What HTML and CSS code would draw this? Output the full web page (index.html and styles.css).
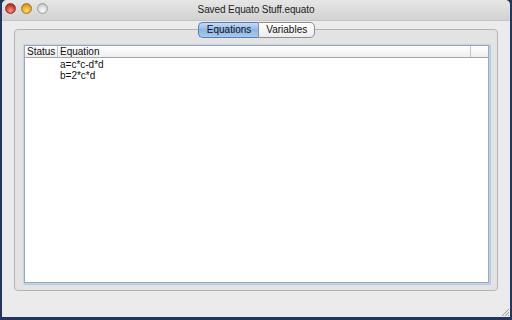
FILE: index.html
```html
<!DOCTYPE html>
<html>
<head>
<meta charset="utf-8">
<link rel="stylesheet" href="styles.css">
</head>
<body>
<div class="window">
  <div class="titlebar">
    <div class="lights">
      <span class="light red"></span>
      <span class="light yellow"></span>
      <span class="light gray"></span>
    </div>
    <div class="title">Saved Equato Stuff.equato</div>
  </div>
  <div class="content">
    <div class="tabbox">
      <div class="tabs">
        <span class="tab selected">Equations</span>
        <span class="tab">Variables</span>
      </div>
      <div class="table">
        <div class="thead">
          <span class="th status">Status</span>
          <span class="th eq">Equation</span>
          <span class="th corner"></span>
        </div>
        <div class="row first"><span class="cell status"></span><span class="cell eq">a=c*c-d*d</span></div>
        <div class="row"><span class="cell status"></span><span class="cell eq">b=2*c*d</span></div>
      </div>
    </div>
    <div class="grip">
      <svg width="10" height="10" viewBox="0 0 10 10"><path d="M9 2L2 9M9 5L5 9M9 8L8 9" stroke="#999" stroke-width="1" fill="none"/></svg>
    </div>
  </div>
</div>
</body>
</html>
```
FILE: styles.css
```css
html, body {
  margin: 0;
  padding: 0;
  width: 512px;
  height: 320px;
  overflow: hidden;
  background: #23365f;
}
body {
  font-family: "Liberation Sans", Arial, sans-serif;
  font-size: 11px;
  color: #111;
}
.window {
  margin: 0 2px;
  height: 317px;
  display: flex;
  flex-direction: column;
  background: #ececec;
  border-radius: 5px 5px 0 0;
  overflow: hidden;
}
.titlebar {
  height: 20px;
  flex: none;
  background: linear-gradient(#e6e6e6, #d2d2d2);
  border-bottom: 1px solid #c6c6c6;
  position: relative;
  display: flex;
  align-items: center;
  justify-content: center;
}
.lights {
  position: absolute;
  left: 3px;
  top: 3px;
  display: flex;
  gap: 5px;
}
.light {
  width: 11px;
  height: 11px;
  border-radius: 50%;
  box-sizing: border-box;
}
.red { background: radial-gradient(circle at 50% 70%, #f39a8e, #c73b2e 60%, #8c1e16); border: 1px solid #8f3a33; }
.yellow { background: radial-gradient(circle at 50% 70%, #fbe18a, #e5a21a 60%, #a76d0c); border: 1px solid #a47930; }
.gray { background: radial-gradient(circle at 50% 70%, #fdfdfd, #d6d6d6 60%, #a8a8a8); border: 1px solid #9d9d9d; }
.title {
  font-size: 10px;
  letter-spacing: -0.1px;
  color: #222;
  margin-top: -2px;
}
.content {
  flex: 1;
  position: relative;
  padding: 8px 12px 26px 12px;
  background: #ebebeb;
}
.tabbox {
  height: 100%;
  box-sizing: border-box;
  border: 1px solid #b4b4b4;
  border-radius: 4px;
  background: #e3e3e3;
  position: relative;
  padding: 15px 8px 7px 9px;
}
.tabs {
  position: absolute;
  top: -8px;
  left: 0;
  right: 0;
  display: flex;
  justify-content: center;
  padding-left: 1px;
}
.tab {
  height: 14px;
  line-height: 14px;
  padding: 0 7px;
  background: linear-gradient(#ffffff, #ececec);
  border: 1px solid #8e8e8e;
  font-size: 10px;
  color: #111;
}
.tab:first-child {
  border-radius: 5px 0 0 5px;
  border-right: none;
}
.tab:last-child {
  border-radius: 0 5px 5px 0;
}
.tab.selected {
  background: linear-gradient(#c8dcf4, #8eb6e8 50%, #a9c9ef);
  border-color: #5b7db0;
  padding: 0 7px 0 8px;
}
.table {
  height: 100%;
  box-sizing: border-box;
  background: #fff;
  border: 1px solid #9aa6ba;
  box-shadow: 0 0 0 1px #c3d3ec, 1px 1px 0 1px #b8c9e6;
}
.thead {
  display: flex;
  height: 11px;
  border-bottom: 1px solid #a6a6a6;
  background: linear-gradient(#ffffff, #eeeeee);
}
.th {
  font-size: 10px;
  line-height: 11px;
  padding-left: 2px;
  border-right: 1px solid #c4c4c4;
  box-sizing: border-box;
}
.th.status { width: 33px; }
.th.eq { flex: 1; }
.th.corner { width: 17px; border-right: none; }
.row {
  display: flex;
  height: 11px;
  line-height: 11px;
  font-size: 10px;
}
.row.first { margin-top: 1px; }
.cell.status { width: 33px; }
.cell.eq { padding-left: 2px; }
.grip {
  position: absolute;
  right: 0;
  bottom: 0;
  width: 10px;
  height: 10px;
}
```
